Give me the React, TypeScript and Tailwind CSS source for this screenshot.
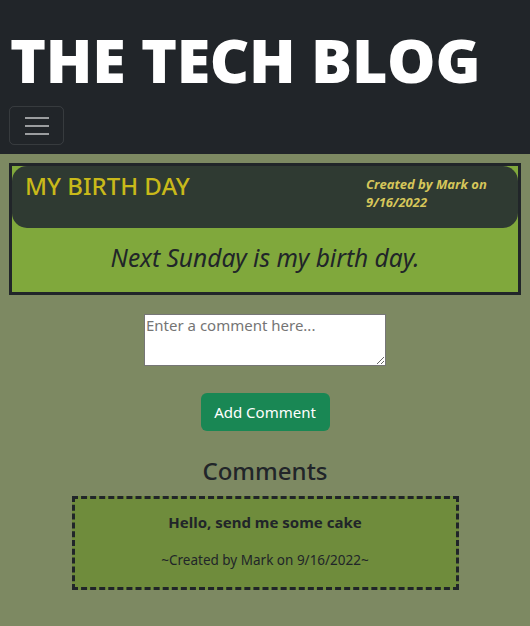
import React from "react";

export default function App() {
  return (
    <div className="min-h-[626px] w-[530px] bg-[#7d8962] text-[#212529]" style={{ fontFamily: '"Noto Sans", "Open Sans", sans-serif' }}>
      <header className="h-[154px] bg-[#212529] px-[10px] pt-[20px]">
        <h1 className="text-[61px] font-black leading-[80px] tracking-[-0.3px] text-white" style={{ fontFamily: '"Open Sans", "Noto Sans", sans-serif' }}>
          THE TECH BLOG
        </h1>
        <button className="mt-[6px] -ml-px flex h-[39px] w-[55px] flex-col items-center justify-center gap-[6px] rounded-[5px] border border-white/10">
          <span className="h-[2px] w-[24px] bg-white/55" />
          <span className="h-[2px] w-[24px] bg-white/55" />
          <span className="h-[2px] w-[24px] bg-white/55" />
        </button>
      </header>
      <main className="px-[9px] pt-[9px]">
        <section className="border-[3px] border-[#212529] bg-[#80a83c]">
          <div className="flex h-[62px] justify-between rounded-[15px] bg-[#2f3a32] pl-[13px] pr-[24px] pt-[5px]">
            <h2 className="text-[24px] font-medium leading-[30px] text-[#c9b91a]">MY BIRTH DAY</h2>
            <p className="mt-[4px] w-[128px] shrink-0 text-[13px] font-bold italic leading-[18px] text-[#d6c65a]" style={{ fontFamily: '"Open Sans", sans-serif' }}>
              Created by Mark on
              <br />
              9/16/2022
            </p>
          </div>
          <p className="pt-[13px] pb-[17px] text-center text-[24.5px] italic leading-[34px]">Next Sunday is my birth day.</p>
        </section>
        <div className="mt-[19px] flex justify-center">
          <textarea
            placeholder="Enter a comment here..."
            className="h-[52px] w-[242px] border border-[#767676] bg-white px-[1px] py-0 text-[15px] leading-[20px] text-black placeholder:text-[#757575]"
          />
        </div>
        <div className="mt-[27px] flex justify-center">
          <button className="h-[38px] w-[129px] rounded-[6px] bg-[#198754] text-[15px] text-white">Add Comment</button>
        </div>
        <h3 className="mt-[24px] text-center text-[24px] font-medium leading-[32px]">Comments</h3>
        <div className="mx-auto mt-[9px] flex h-[94px] w-[387px] flex-col items-center border-[3px] border-dashed border-[#212529] bg-[#6f8c3c] pt-[13px]">
          <p className="text-[15px] font-bold leading-[20px]">Hello, send me some cake</p>
          <p className="mt-[19px] text-[13.5px] leading-[18px]">~Created by Mark on 9/16/2022~</p>
        </div>
      </main>
    </div>
  );
}
